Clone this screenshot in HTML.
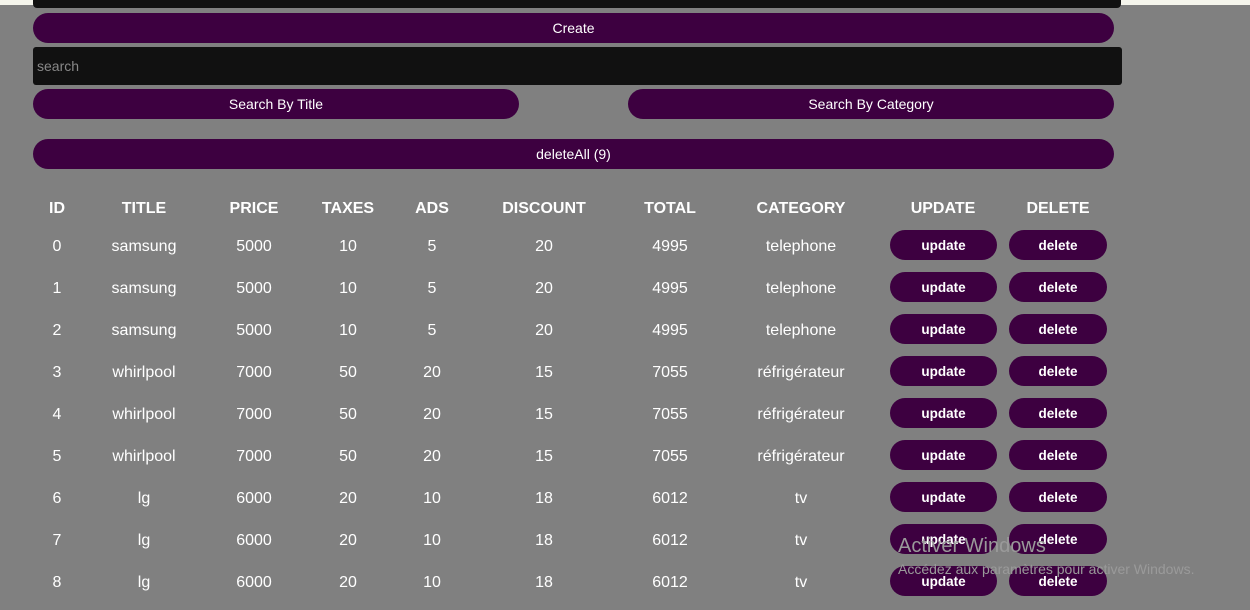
<!DOCTYPE html>
<html><head><meta charset="utf-8"><style>
*{margin:0;padding:0;box-sizing:border-box}
body{width:1250px;height:610px;background:#808080;position:relative;overflow:hidden;font-family:"Liberation Sans",sans-serif;color:#fff}
.a{position:absolute}
.btn{position:absolute;background:#3d0040;border-radius:15px;color:#fff;font-size:14px;display:flex;align-items:center;justify-content:center}
.c{position:absolute;transform:translateX(-50%);white-space:nowrap;font-size:16px}
.h{font-weight:bold}
.sb{position:absolute;background:#3d0040;border-radius:15px;font-size:13.5px;font-weight:600;display:flex;align-items:center;justify-content:center;height:30px}
</style></head><body>
<div class="a" style="left:0;top:0;width:1250px;height:5px;background:#f5f5ec"></div>
<div class="a" style="left:33px;top:0;width:1088px;height:8px;background:#111;border-radius:0 0 4px 4px"></div>
<div class="btn" style="left:33px;top:13px;width:1081px;height:30px">Create</div>
<div class="a" style="left:33px;top:47px;width:1089px;height:38px;background:#111;border-radius:3px;color:#888;font-size:14px;padding:11px 0 0 4px">search</div>
<div class="btn" style="left:33px;top:89px;width:486px;height:30px">Search By Title</div>
<div class="btn" style="left:628px;top:89px;width:486px;height:30px">Search By Category</div>
<div class="btn" style="left:33px;top:139px;width:1081px;height:30px">deleteAll (9)</div>
<div id="t"></div>
<div class="a" style="left:898px;top:535px;font-size:20px;color:#9a9a9a">Activer Windows</div>
<div class="a" style="left:898px;top:561px;font-size:14px;color:#9a9a9a">Accédez aux paramètres pour activer Windows.</div>
<script>
var cols=[57,144,254,348,432,544,670,801];
var hd=["ID","TITLE","PRICE","TAXES","ADS","DISCOUNT","TOTAL","CATEGORY"];
var rows=[];
for(var i=0;i<9;i++){
 if(i<3)rows.push([i,"samsung",5000,10,5,20,4995,"telephone"]);
 else if(i<6)rows.push([i,"whirlpool",7000,50,20,15,7055,"réfrigérateur"]);
 else rows.push([i,"lg",6000,20,10,18,6012,"tv"]);
}
var h="";
hd.forEach(function(t,j){h+='<div class="c h" style="left:'+cols[j]+'px;top:200px">'+t+'</div>'});
h+='<div class="c h" style="left:943px;top:200px">UPDATE</div><div class="c h" style="left:1058px;top:200px">DELETE</div>';
rows.forEach(function(r,i){
 var y=238+42*i;
 r.forEach(function(t,j){h+='<div class="c" style="left:'+cols[j]+'px;top:'+y+'px">'+t+'</div>'});
 var by=230+42*i;
 h+='<div class="sb" style="left:890px;top:'+by+'px;width:107px">update</div>';
 h+='<div class="sb" style="left:1009px;top:'+by+'px;width:98px">delete</div>';
});
document.getElementById("t").outerHTML=h;
</script>
</body></html>
